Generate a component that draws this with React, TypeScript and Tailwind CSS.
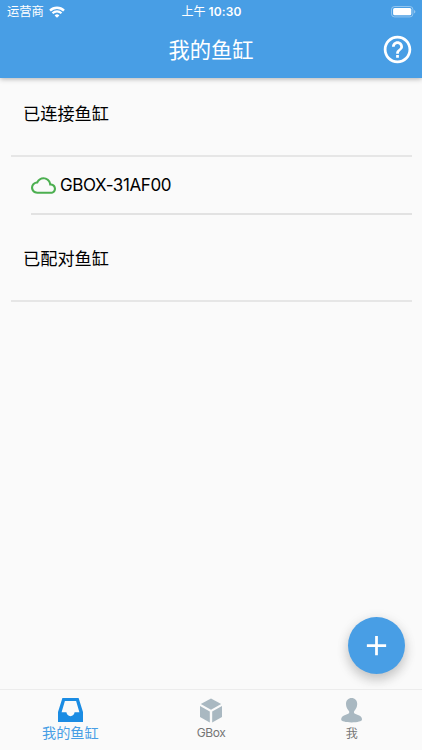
import { MdAdd, MdCloudQueue, MdHelpOutline } from "react-icons/md";

const WifiIcon = () => (
	<svg className="h-[12px] w-[16px]" viewBox="0 0 15 11.5" fill="none" stroke="white">
		<path d="M0.8 4.4a9.6 9.6 0 0 1 13.4 0" strokeWidth="2.3" />
		<path d="M3.2 7a6.1 6.1 0 0 1 8.6 0" strokeWidth="2.1" />
		<path d="M7.5 11.3 5.2 9a3.3 3.3 0 0 1 4.6 0z" fill="white" stroke="none" />
	</svg>
);

const BatteryIcon = () => (
	<svg className="h-[12px] w-[25px]" viewBox="0 0 25 12">
		<rect x="0.5" y="0.5" width="21.4" height="10.4" rx="3" fill="none" stroke="white" strokeOpacity="0.4" />
		<rect x="2.1" y="2.1" width="18.2" height="7.2" rx="1.5" fill="white" />
		<path d="M23.2 4v3.6a2 2 0 0 0 0-3.6z" fill="white" fillOpacity="0.5" />
	</svg>
);

const TankIcon = () => (
	<svg className="h-[24px] w-[25px]" viewBox="0 0 25 24" fill="#1b8ce3">
		<path
			fillRule="evenodd"
			d="M4.4 0h16.2L25 14V24H0V14zM6.9 2.900 3.600 14.300h4.800c.3 2.300 1.900 3.900 4.100 3.900s3.800-1.600 4.100-3.900h4.800L18.100 2.900z"
		/>
	</svg>
);

const BoxIcon = () => (
	<svg className="h-[25px] w-[22px]" viewBox="0 0 22 25" fill="#a9b8c1">
		<path d="M11 0.4 21.2 6 11 11.7 0.8 6z" />
		<path d="M0 8.1 9.8 13.6V24.4L0 18.9z" />
		<path d="M22 8.1 12.2 13.6V24.4L22 18.9z" />
	</svg>
);

const PersonIcon = () => (
	<svg className="h-[25px] w-[22px]" viewBox="0 0 22 25" fill="#a9b8c1">
		<path d="M10.6 0C7.3 0 5 2.4 5 6c0 3 1.2 5 2.7 6.7.9 1.1.7 2.5-.5 3L3 17.5C1 18.4.2 19.7.2 21.8c0 1.500 4.500 2.600 10.400 2.600S21 23.300 21 21.800c0-2.100-.8-3.400-2.800-4.300l-4.200-1.800c-1.200-.5-1.400-1.900-.5-3C15 11 16.200 9 16.200 6c0-3.600-2.300-6-5.600-6z" />
	</svg>
);

const SectionTitle = ({ title }: { title: string }) => (
	<div className="mr-[10px] ml-[11px] flex border-b-2 border-[#e6e6e6] px-3 text-[17.2px] leading-[26px]">
		{title}
	</div>
);

const Header = () => (
	<header className="relative h-[78px] bg-[#489ee5] text-white shadow-[0_1px_5px_rgba(0,0,0,0.3)]">
		<div className="grid h-[22px] grid-cols-3 items-center pr-[6px] pl-[7px] text-[12px] leading-[22px]">
			<div className="flex items-center gap-[5px]">
				<span className="pt-px text-[12.3px]">运营商</span>
				<WifiIcon />
			</div>
			<div className="flex justify-center gap-[3px] whitespace-nowrap">
				<span>上午</span>
				<span className="font-semibold tracking-[0.1px]">10:30</span>
			</div>
			<div className="flex justify-end">
				<BatteryIcon />
			</div>
		</div>
		<div className="grid h-[55px] grid-cols-[48px_1fr_48px] items-center">
			<h1 className="col-start-2 pt-[2px] text-center text-[21.3px] font-normal">我的鱼缸</h1>
			<MdHelpOutline className="ml-[7px] size-[33px]" />
		</div>
	</header>
);

export default function App() {
	return (
		<div className="relative flex h-[750px] w-[422px] flex-col overflow-hidden bg-[#fafafa] font-['Inter','Noto_Sans_CJK_SC',sans-serif] text-black">
			<Header />
			<main className="flex-1">
				<div className="pt-[23px] [&>div]:h-[56px]">
					<SectionTitle title="已连接鱼缸" />
				</div>
				<div className="mr-[10px] ml-[31px] flex h-[58px] items-center gap-[4px] border-b-2 border-[#e2e2e2]">
					<MdCloudQueue className="size-[25px] text-[#4caf50]" />
					<span className="pt-[2px] text-[17px] tracking-[-0.4px]">GBOX-31AF00</span>
				</div>
				<div className="pt-[31px] [&>div]:h-[56px]">
					<SectionTitle title="已配对鱼缸" />
				</div>
			</main>
			<button className="absolute right-[17px] bottom-[76px] flex size-[57px] items-center justify-center rounded-full bg-[#489ee5] text-white shadow-[0_6px_12px_rgba(0,0,0,0.18),0_2px_14px_rgba(0,0,0,0.08)]">
				<MdAdd className="size-[33px]" />
			</button>
			<nav className="relative grid h-[61px] grid-cols-3 border-t border-[#ececec] bg-[#fafafa] pt-[8px]">
				<div className="flex flex-col items-center">
					<TankIcon />
					<span className="text-[14.2px] leading-[22px] text-[#489ee5]">我的鱼缸</span>
				</div>
				<div className="flex flex-col items-center">
					<BoxIcon />
					<span className="text-[12px] leading-[20px] tracking-[-0.4px] text-[#757575]">GBox</span>
				</div>
				<div className="flex flex-col items-center">
					<PersonIcon />
					<span className="pt-px text-[12px] leading-[20px] text-[#757575]">我</span>
				</div>
			</nav>
		</div>
	);
}
